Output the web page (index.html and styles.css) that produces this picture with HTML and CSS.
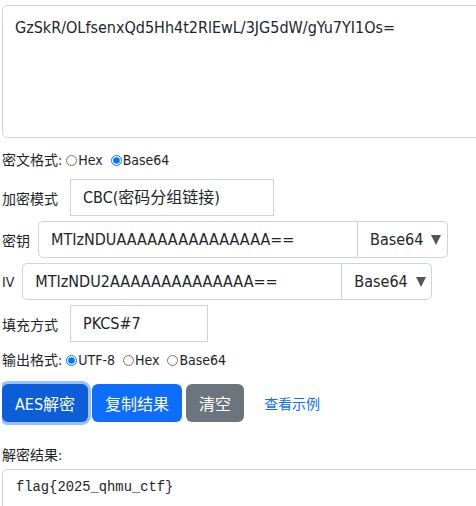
FILE: index.html
```html
<!DOCTYPE html>
<html lang="zh-CN">
  <head>
    <meta charset="UTF-8" />
    <meta name="viewport" content="width=device-width, initial-scale=1.0" />
    <title>AES解密</title>
    <link rel="stylesheet" href="styles.css">
  </head>
  <body>
    <textarea class="cipherText">GzSkR/OLfsenxQd5Hh4t2RlEwL/3JG5dW/gYu7YI1Os=</textarea>

    <div class="radioRow">
      密文格式:
      <label><input type="radio" name="inFmt" />Hex</label>
      <label><input type="radio" name="inFmt" checked />Base64</label>
    </div>

    <div class="field first">
      <span class="fieldLabel wide">加密模式</span>
      <div class="box modeBox">CBC(密码分组链接)</div>
    </div>

    <div class="field">
      <span class="fieldLabel">密钥</span>
      <div class="group">
        <div class="box groupInput">MTIzNDUAAAAAAAAAAAAAAA==</div>
        <div class="box selectBox">Base64<span class="arrow"></span></div>
      </div>
    </div>

    <div class="field">
      <span class="fieldLabel">IV</span>
      <div class="group">
        <div class="box groupInput">MTIzNDU2AAAAAAAAAAAAAA==</div>
        <div class="box selectBox">Base64<span class="arrow"></span></div>
      </div>
    </div>

    <div class="field">
      <span class="fieldLabel wide">填充方式</span>
      <div class="box padBox">PKCS#7</div>
    </div>

    <div class="radioRow second">
      输出格式:
      <label><input type="radio" name="outFmt" checked />UTF-8</label>
      <label><input type="radio" name="outFmt" />Hex</label>
      <label><input type="radio" name="outFmt" />Base64</label>
    </div>

    <div class="buttons">
      <button class="btn primary active">AES解密</button>
      <button class="btn primary">复制结果</button>
      <button class="btn secondary">清空</button>
      <a class="exampleLink" href="#">查看示例</a>
    </div>

    <div class="resultLabel">解密结果:</div>
    <pre class="result">flag{2025_qhmu_ctf}</pre>
  </body>
</html>
```

FILE: styles.css
```css
html {
  overflow: hidden;
}

body {
  margin: 5px 0 0 2px;
  font-family: "DejaVu Sans Condensed", "Liberation Sans", "Noto Sans CJK SC", sans-serif;
  color: #212529;
  background: #fff;
}

.cipherText {
  display: block;
  width: 520px;
  height: 133px;
  box-sizing: border-box;
  padding: 10px 12px;
  border: 1px solid #ced4da;
  border-radius: 5px;
  font-family: inherit;
  font-size: 16px;
  line-height: 24px;
  color: #212529;
  resize: none;
}

.radioRow {
  margin-top: 12px;
  height: 20px;
  line-height: 20px;
  font-size: 14px;
  display: flex;
  align-items: center;
}

.radioRow label {
  display: flex;
  align-items: center;
  margin-right: 4px;
}

.radioRow input {
  margin: 0 1px 0 4px;
  width: 11px;
  height: 11px;
}

.radioRow.second {
  margin-top: 8px;
}

.field {
  display: flex;
  align-items: center;
  margin-top: 5px;
}

.field.first {
  margin-top: 9px;
}

.fieldLabel {
  font-size: 14px;
  margin-right: 8px;
}

.fieldLabel.wide {
  margin-right: 12px;
}

.box {
  box-sizing: border-box;
  height: 37px;
  line-height: 35px;
  padding: 0 12px;
  border: 1px solid #ced4da;
  font-size: 16px;
  white-space: nowrap;
}

.modeBox {
  width: 204px;
}

.padBox {
  width: 138px;
}

.group {
  display: flex;
}

.groupInput {
  width: 320px;
  border-radius: 5px 0 0 5px;
}

.selectBox {
  width: 90px;
  border-left: none;
  border-radius: 0 5px 5px 0;
}

.arrow {
  display: inline-block;
  vertical-align: middle;
  margin: -2px 0 0 8px;
  border-left: 5px solid transparent;
  border-right: 5px solid transparent;
  border-top: 10px solid #555;
}

.buttons {
  margin-top: 14px;
  display: flex;
  align-items: center;
}

.btn {
  height: 38px;
  padding: 0 12px;
  margin-right: 4px;
  border: 1px solid transparent;
  border-radius: 6px;
  font-family: inherit;
  font-size: 16px;
  color: #fff;
  cursor: pointer;
}

.primary {
  background-color: #0d6efd;
}

.primary.active {
  background-color: #0b5ed7;
  box-shadow: 0 0 0 3px #98c1fe;
}

.secondary {
  background-color: #6c757d;
}

.exampleLink {
  margin-left: 16px;
  font-size: 14px;
  color: #0d6efd;
  text-decoration: none;
}

.resultLabel {
  margin-top: 23px;
  font-size: 14px;
  line-height: 20px;
}

.result {
  margin: 4px 0 0 0;
  width: 520px;
  height: 80px;
  box-sizing: border-box;
  padding: 9px 13px;
  border: 1px solid #ced4da;
  border-radius: 5px;
  font-family: "Liberation Mono", "Courier New", monospace;
  font-size: 13.8px;
  line-height: 18px;
}
```
